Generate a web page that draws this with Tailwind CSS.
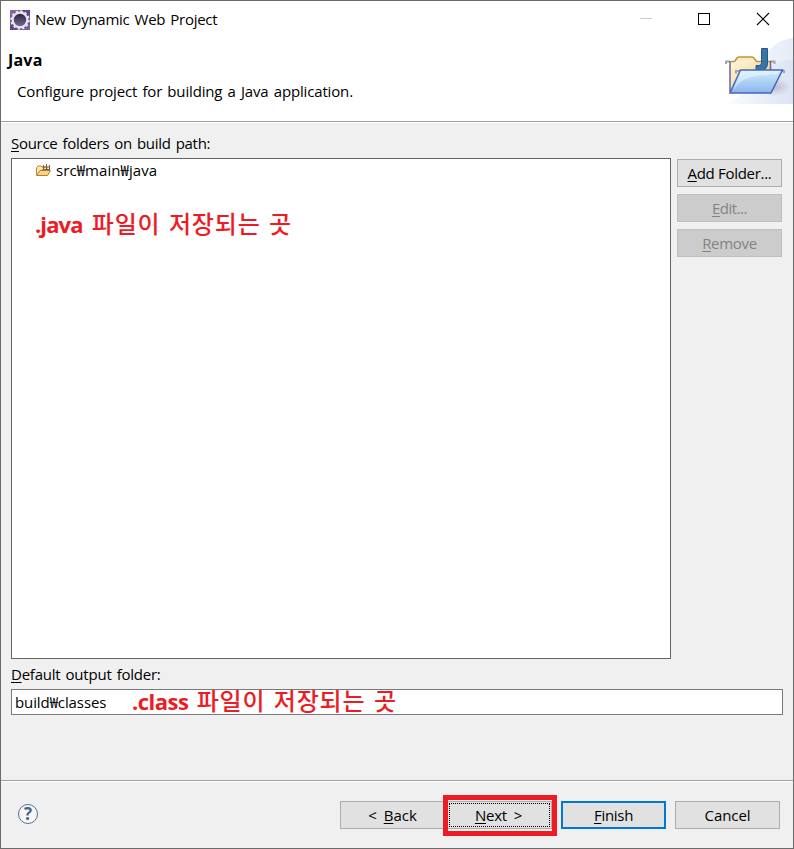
<!DOCTYPE html>
<html lang="ko">
<head>
<meta charset="utf-8">
<title>New Dynamic Web Project</title>
<script src="https://cdn.jsdelivr.net/npm/@tailwindcss/browser@4"></script>
</head>
<body class="bg-[#f0f0f0]">
<div class="flex h-[849px] w-[794px] flex-col overflow-hidden border border-[#6b6b6b] bg-[#f0f0f0] font-['Open_Sans','Noto_Sans_CJK_KR',sans-serif] text-[15px] leading-5 whitespace-nowrap text-black [word-spacing:1.5px]">
  <header class="flex h-[120px] shrink-0 flex-col bg-white">
    <div class="flex h-[37px] items-center pl-[9px]">
      <svg class="size-5 shrink-0" viewBox="0 0 20 20">
        <defs><linearGradient id="ec" x1="0" y1="0" x2="1" y2="1"><stop offset="0" stop-color="#8a70b0"/><stop offset=".5" stop-color="#5d4488"/><stop offset="1" stop-color="#8067a5"/></linearGradient>
        <linearGradient id="core" x1="0" y1="0" x2="0" y2="1"><stop offset="0" stop-color="#27213f"/><stop offset="1" stop-color="#77718f"/></linearGradient></defs>
        <path fill="url(#ec)" d="M0 0h20v20H0z"/>
        <circle cx="10" cy="10" r="8.700" fill="none" stroke="#e9e7ed" stroke-width="2" stroke-dasharray="2.300 2.255"/>
        <circle cx="10" cy="10" r="7.300" fill="url(#core)" stroke="#e9e7ed" stroke-width="2.200"/>
      </svg>
      <h1 class="-mt-0.5 ml-[5px] flex-1 tracking-[-0.28px]">New Dynamic Web Project</h1>
      <svg class="mr-[23px] h-5 w-[130px] -translate-y-px" viewBox="0 0 130 20" fill="none" shape-rendering="crispEdges">
        <path d="M0 9.500h12" stroke="#ccc"/>
        <path d="M58.500 4.500h11v11h-11z" stroke="#000"/>
        <path d="M117 4l12 12m0-12l-12 12" stroke="#000" stroke-width="1.100" shape-rendering="auto"/>
      </svg>
    </div>
    <div class="flex flex-1 justify-between">
      <div class="pl-[7px] pt-3">
        <h2 class="text-[16px] leading-5 font-bold tracking-[0.2px]">Java</h2>
        <p class="mt-[11px] pl-[9px] tracking-[-0.16px]">Configure project for building a Java application.</p>
      </div>
      <svg class="h-[67px] w-[79px]" viewBox="0 0 79 67">
        <defs>
          <linearGradient id="bg" x1="0" y1="0" x2="1" y2="0"><stop offset="0" stop-color="#fff"/><stop offset="1" stop-color="#dbe3f5"/></linearGradient>
          <linearGradient id="back" x1="0" y1="0" x2="1" y2="1"><stop offset="0" stop-color="#fff8dc"/><stop offset="1" stop-color="#e8c474"/></linearGradient>
          <linearGradient id="front" x1="0" y1="0" x2="0" y2="1"><stop offset="0" stop-color="#d0f0ff"/><stop offset="1" stop-color="#8bb4ee"/></linearGradient>
          <radialGradient id="shade"><stop offset="0" stop-color="#9c8da3" stop-opacity=".5"/><stop offset="1" stop-color="#9c8da3" stop-opacity="0"/></radialGradient>
        </defs>
        <path fill="url(#bg)" d="M5 66C28 64 33 49 43 31C52 14 62 2 79 0V66z"/>
        <path fill="#fff" opacity=".3" d="M45 36C55 29 65 22 79 22V0C60 4 51 16 45 36z"/>
        <ellipse cx="61" cy="49" rx="15" ry="9" fill="url(#shade)"/>
        <path d="M16 23.500H57V54H16z" fill="url(#back)"/>
        <path d="M12 26v-2.500h4M57 23.500h3.500v2.500" fill="none" stroke="#a7a3a6" stroke-width="2"/>
        <path d="M17 23.500h3.500l2.500-3.500q1-1 2.500-1h12q1.500 0 2.500 1l2.500 3.500H57" fill="#f9eabf" stroke="#bd9442" stroke-width="1.500"/>
        <path d="M16 23v31M56.500 23v9" stroke="#6664a4" stroke-width="1.500"/>
        <path d="M47.500 10.500H53.500V25q0 7-6.500 7h-5v-4.500h3q2.500 0 2.500-3z" fill="#3875a6" stroke="#24588a"/>
        <path d="M22 35.500v-2.500h5M65 33h5v2" fill="none" stroke="#a7a3a6" stroke-width="2"/>
        <path d="M26.500 32h42L57 55H16z" fill="url(#front)" stroke="#4766c0" stroke-width="1.500"/>
        <path d="M27 33h38.500l-2 3C45 37 31 39 24 46L19 52z" fill="#fff" opacity=".4"/>
      </svg>
    </div>
  </header>
  <div class="h-0.5 shrink-0 border-t border-b border-t-[#a0a0a0] border-b-white"></div>

  <main class="flex h-[657px] shrink-0 flex-col px-2.5 pt-[10px]">
    <label class="h-[25px] tracking-[-0.3px]"><span class="underline underline-offset-2">S</span>ource folders on build path:</label>
    <div class="flex h-[501px] gap-[6px]">
      <div class="w-[660px] border border-[#646464] bg-white">
        <div class="flex h-[23px] items-center pl-6">
          <svg class="mr-[5px] h-4 w-[15px] -translate-y-px" viewBox="0 0 15 16">
            <path d="M.5 13V5.500L2 4h3l1 1h5v8" fill="#ffe6a5" stroke="#b98946"/>
            <path d="M6.500 5h7.500M6.500 7.500h7.500M7.500 3v5.500M10.500 2v6.500M13.500 3v5.500" stroke="#815b43"/>
            <path d="M.5 13.500L4 8.500h10.500l-3 5z" fill="#f9d584" stroke="#b07e38"/>
          </svg>
          <span class="-mt-px tracking-[0.07px]">src₩main₩java</span>
        </div>
        <p class="mt-[26px] pl-[23px] text-[22px] leading-8 font-bold text-[#ed1c24]"><span class="tracking-[-0.9px]">.java</span> <span class="ml-0.5 text-[24px] font-medium tracking-[0.8px]">파일이 저장되는 곳</span></p>
      </div>
      <div class="flex w-[105px] flex-col gap-[7px] pt-px">
        <button class="h-7 border border-[#adadad] bg-[#e1e1e1] tracking-[-0.3px]"><span class="underline underline-offset-2">A</span>dd Folder...</button>
        <button class="h-7 border border-[#bfbfbf] bg-[#ccc] tracking-[-0.5px] text-[#838383]"><span class="underline underline-offset-2">E</span>dit...</button>
        <button class="h-7 border border-[#bfbfbf] bg-[#ccc] tracking-[-0.3px] text-[#838383]"><span class="underline underline-offset-2">R</span>emove</button>
      </div>
    </div>
    <label class="mt-[5px] h-[25px] tracking-[-0.23px]"><span class="underline underline-offset-2">D</span>efault output folder:</label>
    <div class="flex h-[26px] w-[772px] items-center border border-[#7a7a7a] bg-white pl-[3px]">
      <span class="w-[117px] tracking-[-0.1px]">build₩classes</span>
      <span class="-mt-[3px] text-[22px] font-bold text-[#ed1c24]"><span class="tracking-[-0.5px]">.class</span> <span class="ml-px text-[24px] font-medium tracking-[0.8px]">파일이 저장되는 곳</span></span>
    </div>
  </main>

  <div class="h-0.5 shrink-0 border-t border-b border-t-[#a0a0a0] border-b-white"></div>
  <footer class="flex flex-1 items-start pt-[13px] pl-[17px]">
    <div class="mt-[9px] flex size-5 items-center justify-center rounded-full border-[1.5px] border-[#5b6f94] bg-[#f7f7f8] text-[17px] leading-4 font-bold text-[#4d6289]">?</div>
    <button class="mt-[6px] ml-[302px] h-7 w-[104px] border border-r-0 border-[#adadad] bg-[#e1e1e1] [word-spacing:3px]">&lt; <span class="underline underline-offset-2">B</span>ack</button>
    <div class="-ml-px h-[41px] w-[114px] border-[5px] border-[#ed1c24] bg-[#f0f0f0] pt-px">
      <button class="block h-7 w-full border-y border-r border-[#adadad] bg-[#e1e1e1] py-px pr-px pl-px">
        <span class="flex h-full items-center justify-center border border-dotted border-black pr-0.5 tracking-[-0.2px] [word-spacing:3px]"><span><span class="underline underline-offset-2">N</span>ext &gt;</span></span>
      </button>
    </div>
    <button class="mt-[6px] ml-1 h-7 w-[105px] border-2 border-[#0078d7] bg-[#e1e1e1] tracking-[-0.3px]"><span class="underline underline-offset-2">F</span>inish</button>
    <button class="mt-[6px] ml-[9px] h-7 w-[105px] border border-[#adadad] bg-[#e1e1e1] tracking-[-0.1px]">Cancel</button>
  </footer>
</div>
</body>
</html>
